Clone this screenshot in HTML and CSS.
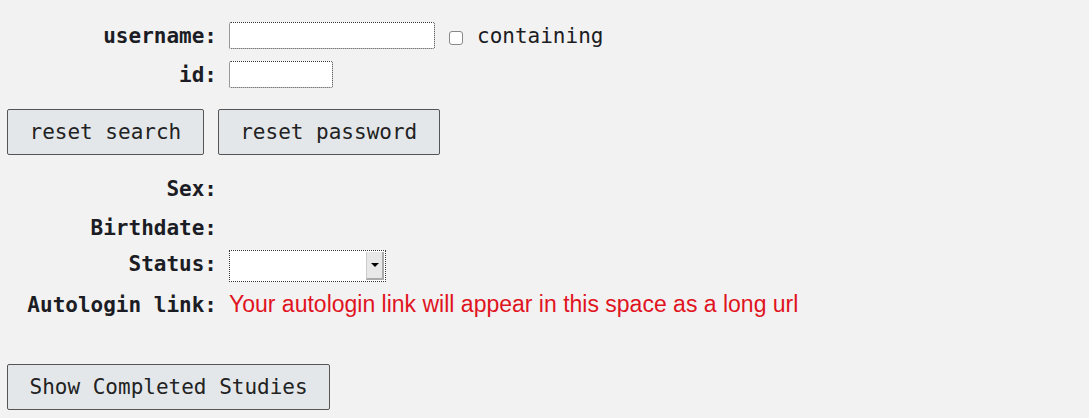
FILE: index.html
```html
<!DOCTYPE html>
<html>
<head>
<meta charset="utf-8">
<link rel="stylesheet" href="styles.css">
</head>
<body>
<div class="page">
  <div class="row r-user">
    <label class="lbl">username:</label>
    <div class="field">
      <input class="txt txt-user" type="text">
      <span class="check"></span>
      <span class="cap">containing</span>
    </div>
  </div>
  <div class="row r-id">
    <label class="lbl">id:</label>
    <div class="field"><input class="txt txt-id" type="text"></div>
  </div>
  <div class="btns">
    <button class="btn">reset search</button>
    <button class="btn">reset password</button>
  </div>
  <div class="row r-sex"><label class="lbl">Sex:</label><div class="field"></div></div>
  <div class="row r-birth"><label class="lbl">Birthdate:</label><div class="field"></div></div>
  <div class="row r-status">
    <label class="lbl">Status:</label>
    <div class="field">
      <span class="select"><span class="sel-body"></span><span class="sel-arrow"><span class="tri"></span></span></span>
    </div>
  </div>
  <div class="row r-auto">
    <label class="lbl">Autologin link:</label>
    <div class="field"><span class="red">Your autologin link will appear in this space as a long url</span></div>
  </div>
  <div class="btns last">
    <button class="btn">Show Completed Studies</button>
  </div>
</div>
</body>
</html>
```
FILE: styles.css
```css
html, body {
  margin: 0;
  padding: 0;
  background: #f2f2f2;
}
body {
  font-family: "DejaVu Sans Mono", monospace;
  font-size: 21px;
  color: #1c1c24;
}
.page {
  display: flex;
  flex-direction: column;
  padding: 22px 0 0 0;
}
.row {
  display: grid;
  grid-template-columns: 217px auto;
  column-gap: 12px;
  align-items: center;
  height: 27px;
}
.lbl {
  text-align: right;
  font-weight: bold;
  white-space: nowrap;
}
.field {
  display: flex;
  align-items: center;
}
.txt {
  box-sizing: border-box;
  height: 27px;
  border: 1px dotted #333;
  background: #fff;
  border-radius: 2px;
  margin: 0;
  padding: 0;
}
.txt-user { width: 206px; }
.txt-id { width: 104px; }
.check {
  width: 14px;
  height: 14px;
  box-sizing: border-box;
  border: 1px solid #888;
  border-radius: 3px;
  background: #fff;
  margin-left: 14px;
  margin-top: 4px;
}
.cap {
  margin-left: 14px;
}
.r-id { margin-top: 12px; }
.btns {
  display: flex;
  gap: 14px;
  margin-top: 21px;
  padding-left: 7px;
}
.btn {
  box-sizing: border-box;
  height: 46px;
  padding: 0 21.5px;
  font-family: "DejaVu Sans Mono", monospace;
  font-size: 21px;
  color: #222;
  background: #e4e7ea;
  border: 1px solid #555;
  border-radius: 2px;
}
.r-sex { margin-top: 20px; }
.r-birth { margin-top: 12px; }
.r-status { margin-top: 9px; height: 32px; }
.r-status .lbl { margin-top: -5px; }
.select {
  display: flex;
  box-sizing: border-box;
  width: 157px;
  height: 32px;
  border: 1px dotted #333;
  background: #fff;
  padding: 1px;
}
.sel-body { flex: 1; }
.sel-arrow {
  width: 15px;
  background: #e8e8e8;
  border-left: 1px solid #ccc;
  border-right: 2px solid #aaa;
  border-bottom: 2px solid #aaa;
  display: flex;
  align-items: center;
  justify-content: center;
}
.tri {
  width: 0;
  height: 0;
  border-left: 4px solid transparent;
  border-right: 4px solid transparent;
  border-top: 4px solid #000;
}
.r-auto { margin-top: 9px; }
.red {
  font-family: "Liberation Sans", Arial, sans-serif;
  font-size: 23px;
  color: #e0141e;
  white-space: nowrap;
}
.btns.last { margin-top: 46px; }
```
